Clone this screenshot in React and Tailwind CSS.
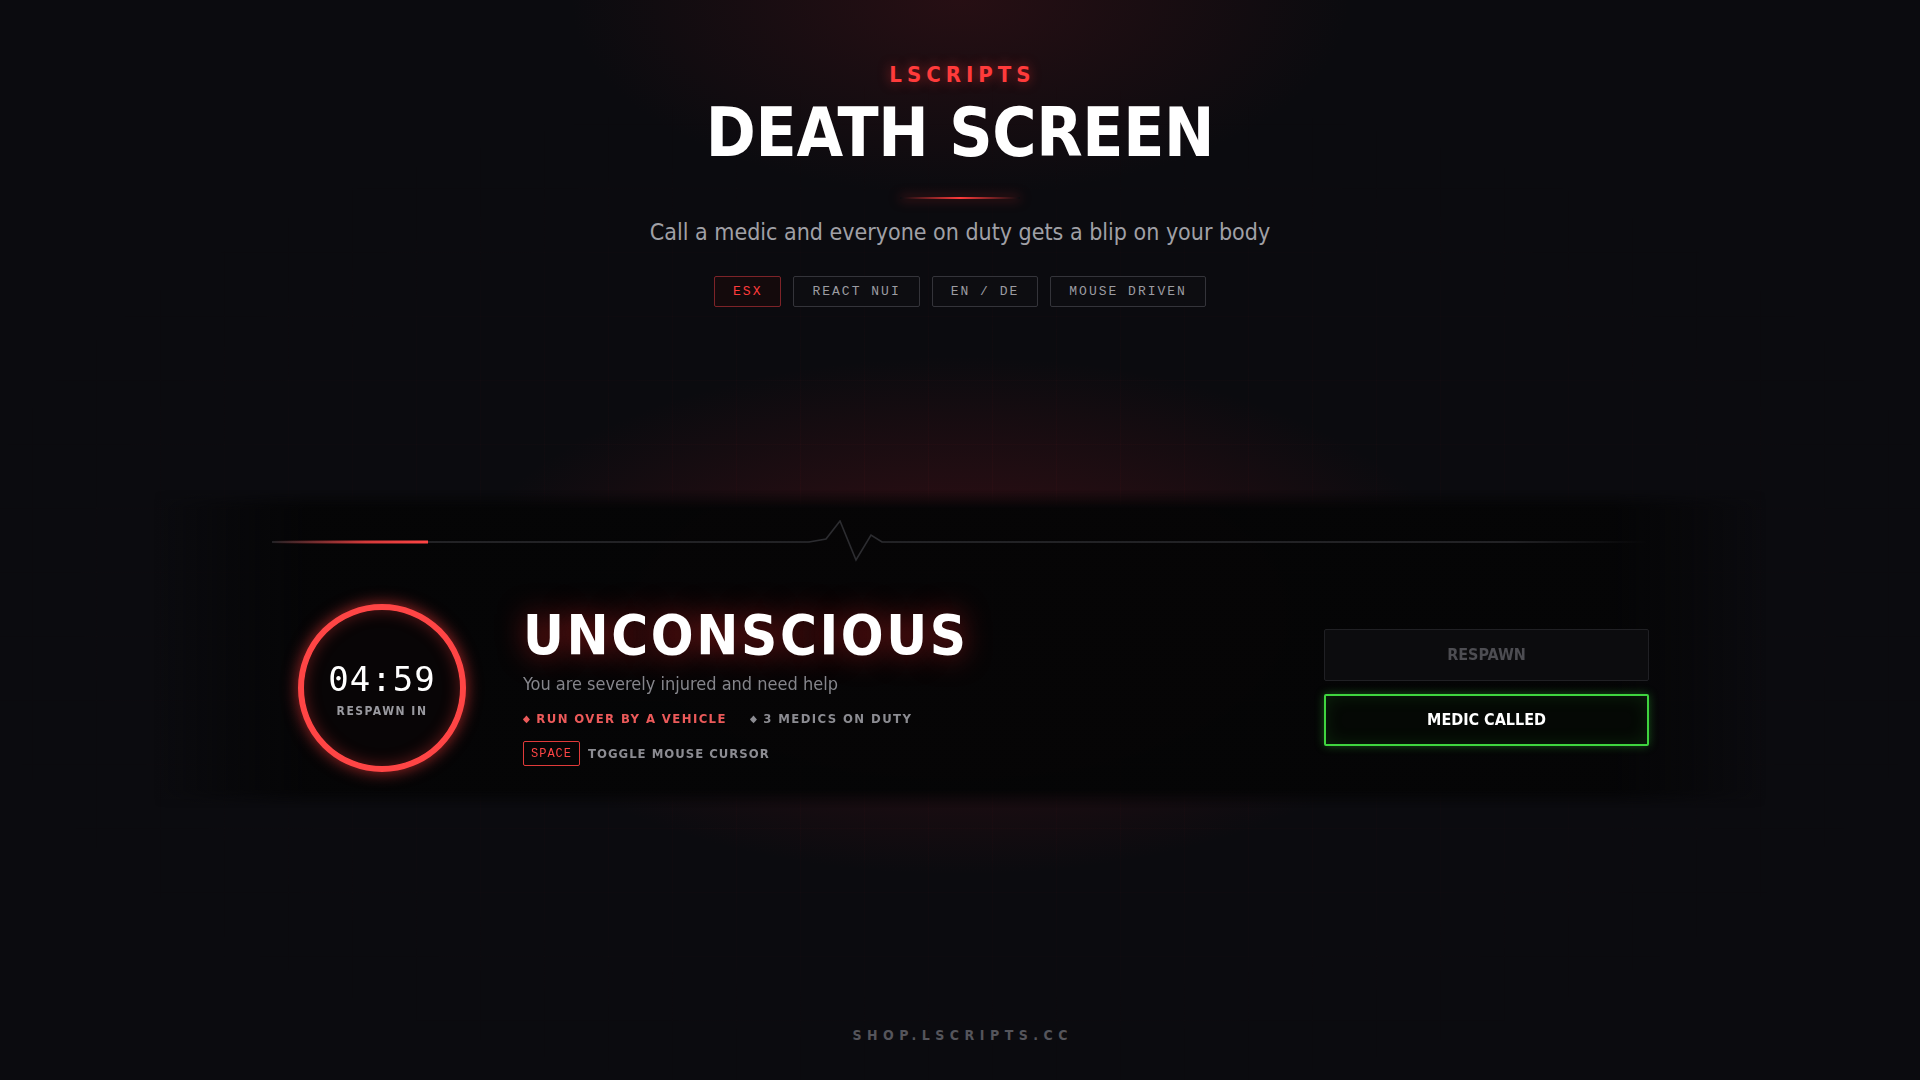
import React from 'react';

const tags = [
  { label: 'ESX', active: true },
  { label: 'REACT NUI' },
  { label: 'EN / DE' },
  { label: 'MOUSE DRIVEN' },
];

const Heartbeat = () => (
  <svg width="1376" height="44" viewBox="0 0 1376 44" className="block">
    <defs>
      <linearGradient id="flat" x1="0" x2="1" y1="0" y2="0">
        <stop offset="0" stopColor="#2c2c30" />
        <stop offset="0.9" stopColor="#2c2c30" />
        <stop offset="1" stopColor="#2c2c30" stopOpacity="0" />
      </linearGradient>
      <linearGradient id="red" x1="0" x2="1" y1="0" y2="0">
        <stop offset="0" stopColor="#ff4040" stopOpacity="0" />
        <stop offset="0.6" stopColor="#ff4040" stopOpacity="0.8" />
        <stop offset="1" stopColor="#ff4545" />
      </linearGradient>
    </defs>
    <polyline
      points="0,22 537,22 554,19 568,1 584,40 599,15 610,22 1376,22"
      fill="none"
      stroke="url(#flat)"
      strokeWidth="1.6"
      strokeLinejoin="miter"
    />
    <rect x="0" y="20.5" width="156" height="3" fill="url(#red)" />
  </svg>
);

export default function App() {
  return (
    <div className="relative h-[1080px] w-full overflow-hidden bg-[#0b0b0f] bg-[radial-gradient(ellipse_520px_260px_at_50%_0%,rgba(90,22,28,0.35),transparent_75%),radial-gradient(ellipse_720px_360px_at_50%_57%,rgba(125,22,30,0.42),transparent_72%)] font-['Liberation_Sans_Narrow','DejaVu_Sans_Condensed','Liberation_Sans',sans-serif] text-white">
      <div className="pointer-events-none absolute inset-0 bg-[linear-gradient(rgba(255,70,70,0.035)_1px,transparent_1px),linear-gradient(90deg,rgba(255,70,70,0.035)_1px,transparent_1px)] bg-[size:64px_64px] bg-center [mask-image:radial-gradient(ellipse_55%_50%_at_50%_55%,black,transparent)]" />

      <header className="relative flex flex-col items-center pt-[64px]">
        <div className="mr-[-5px] text-[22px] font-bold leading-none tracking-[5px] text-[#ff3b3b] [text-shadow:0_0_12px_rgba(255,50,50,0.55)]">
          LSCRIPTS
        </div>
        <h1 className="mt-[14px] text-[67px] font-bold leading-none tracking-[-0.3px] text-white">
          DEATH SCREEN
        </h1>
        <div className="mt-[30px] h-[2px] w-[120px] bg-[linear-gradient(90deg,transparent,#ff3b3b,transparent)] shadow-[0_0_12px_rgba(255,50,50,0.6)]" />
        <p className="mt-[22px] text-[23px] leading-none text-[#a0a0a6]">
          Call a medic and everyone on duty gets a blip on your body
        </p>
        <div className="mt-[32px] flex gap-[12px]">
          {tags.map((t) => (
            <span
              key={t.label}
              className={
                t.active
                  ? "flex h-[31px] items-center rounded-[2px] border border-[#7d2328] bg-[#140a0c] px-[18px] font-['Liberation_Mono',monospace] text-[13px] tracking-[2px] text-[#ff3b3b]"
                  : "flex h-[31px] items-center rounded-[2px] border border-[#34343a] bg-[#0d0d11] px-[18px] font-['Liberation_Mono',monospace] text-[13px] tracking-[2px] text-[#9c9ca2]"
              }
            >
              {t.label}
            </span>
          ))}
        </div>
      </header>

      <section className="relative mt-[183px] h-[318px] bg-[linear-gradient(90deg,transparent_8%,rgba(5,5,6,0.97)_16%,rgba(5,5,6,0.97)_84%,transparent_92%)] [mask-image:linear-gradient(180deg,transparent,black_18px,black_calc(100%-18px),transparent)]">
        <div className="mx-auto w-[1376px] pt-[30px]">
          <Heartbeat />
          <div className="mt-[40px] flex items-start pl-[26px]">
            <div className="flex h-[168px] w-[168px] shrink-0 flex-col items-center justify-center rounded-full border-[6px] border-[#ff4545] bg-[#080506] shadow-[0_0_16px_rgba(255,60,60,0.65),inset_0_0_16px_rgba(255,60,60,0.35)]">
              <div className="mt-[2px] font-['DejaVu_Sans_Mono',monospace] text-[34px] leading-none tracking-[1px] text-white">
                04:59
              </div>
              <div className="mt-[9px] text-[12px] font-bold leading-none tracking-[1.5px] text-[#9a9aa0]">
                RESPAWN IN
              </div>
            </div>

            <div className="ml-[57px] mt-[3px] flex flex-col">
              <h2 className="text-[56px] font-bold leading-none tracking-[2.6px] text-white [text-shadow:0_0_28px_rgba(255,40,40,0.5)]">
                UNCONSCIOUS
              </h2>
              <p className="mt-[12px] text-[18px] leading-none text-[#85858b]">
                You are severely injured and need help
              </p>
              <div className="mt-[19px] flex items-center gap-[23px] text-[13px] font-bold leading-none tracking-[1.4px]">
                <span className="flex items-center gap-[5px] text-[#ec5a5a]">
                  <span className="text-[10px]">◆</span>RUN OVER BY A VEHICLE
                </span>
                <span className="flex items-center gap-[5px] text-[#8c8c92]">
                  <span className="text-[10px]">◆</span>3 MEDICS ON DUTY
                </span>
              </div>
              <div className="mt-[16px] flex items-center gap-[8px]">
                <span className="flex h-[25px] items-center rounded-[2px] border border-[#e03a3a] px-[7px] font-['Liberation_Mono',monospace] text-[12px] tracking-[1px] text-[#ff4545]">
                  SPACE
                </span>
                <span className="text-[13px] font-bold leading-none tracking-[1px] text-[#8c8c92]">
                  TOGGLE MOUSE CURSOR
                </span>
              </div>
            </div>

            <div className="ml-auto mr-[-1px] mt-[25px] flex w-[325px] flex-col gap-[13px]">
              <button className="flex h-[52px] items-center justify-center rounded-[2px] border border-[#202024] bg-[#0c0c0e] text-[16px] font-bold text-[#4d4d52]">
                RESPAWN
              </button>
              <button className="flex h-[52px] items-center justify-center rounded-[2px] border-2 border-[#3fd43f] bg-[#050805] text-[16px] font-bold text-white shadow-[0_0_10px_rgba(60,220,60,0.35),inset_0_0_18px_rgba(60,220,60,0.12)]">
                MEDIC CALLED
              </button>
            </div>
          </div>
        </div>
      </section>

      <footer className="relative mt-[220px] flex justify-center">
        <span className="mr-[-5.5px] text-[14px] font-bold leading-none tracking-[5.5px] text-[#55555b]">
          SHOP.LSCRIPTS.CC
        </span>
      </footer>
    </div>
  );
}
